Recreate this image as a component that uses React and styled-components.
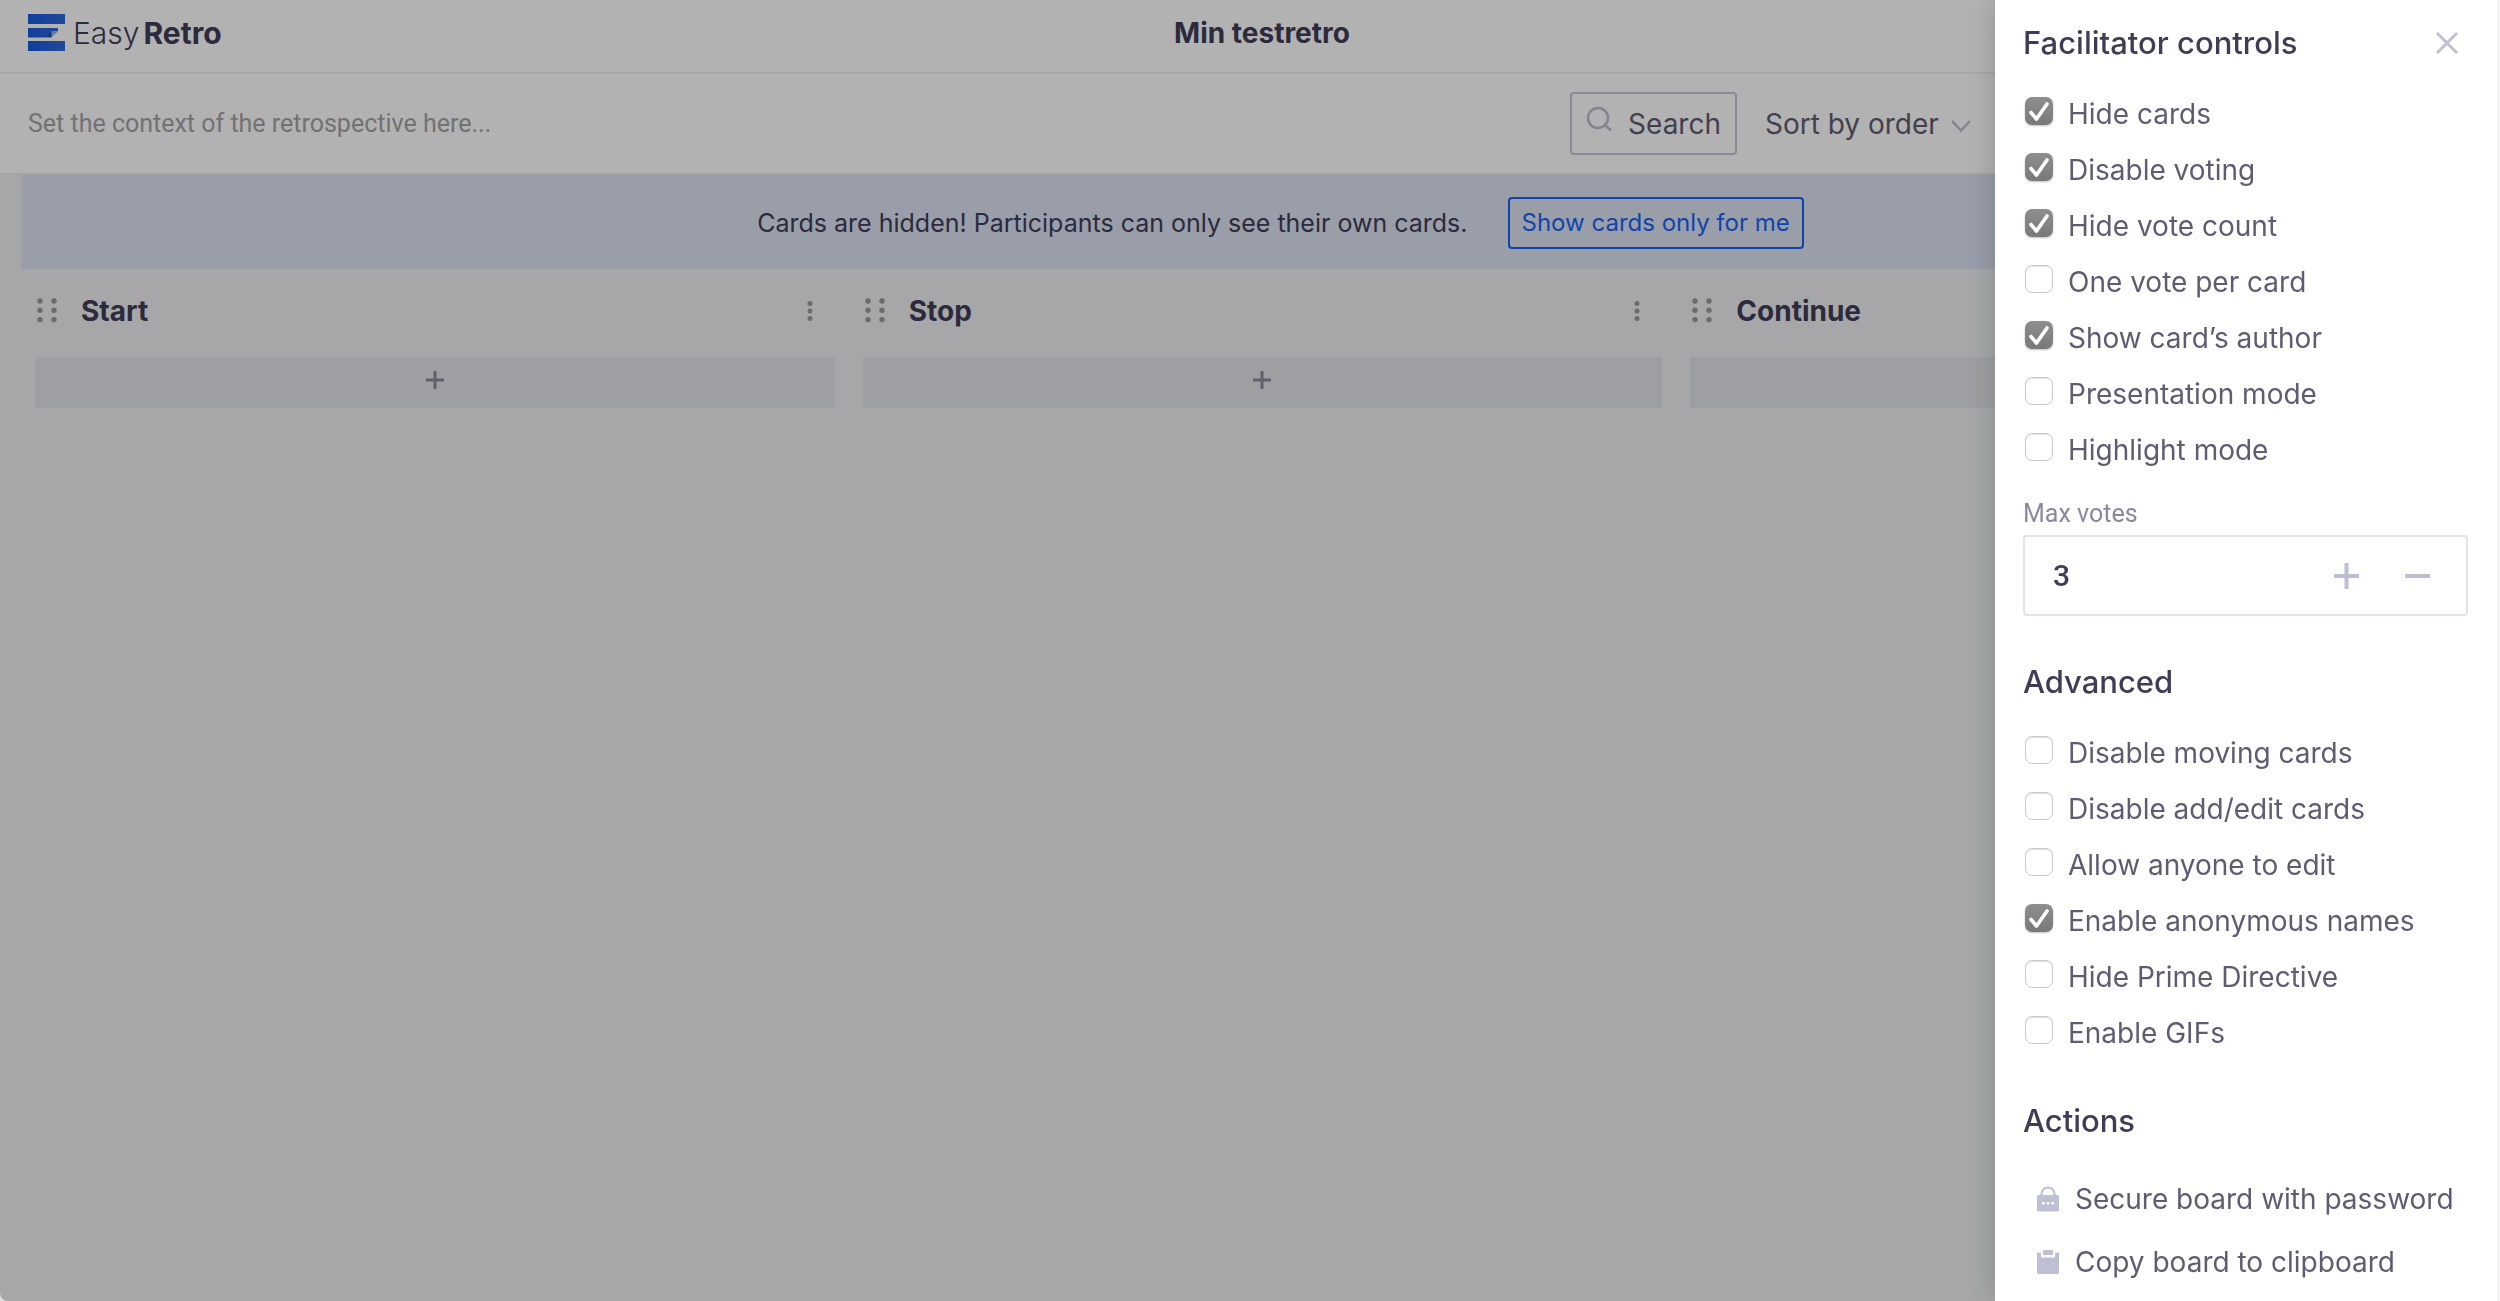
import React, { useState } from "react";
import styled, { createGlobalStyle } from "styled-components";

const INTER = `Inter, "Liberation Sans", sans-serif`;
const ROBOTO = `Roboto, "Liberation Sans", sans-serif`;

const GlobalStyle = createGlobalStyle`
  *, *::before, *::after { box-sizing: border-box; }
  html { background: #dedede; }
  body { margin: 0; font-family: ${INTER}; color: #3f3d56; overflow: hidden; }
  button, input, select { font: inherit; color: inherit; }
  h1, h2, ul { margin: 0; padding: 0; }
  ul { list-style: none; }
  svg { display: block; flex: none; }
`;

const Page = styled.div`
  position: relative;
  display: flex;
  flex-direction: column;
  min-height: 100vh;
  background: #eff0f2;
  overflow: hidden;
  border-bottom-left-radius: 8px;
`;

const TopBar = styled.header`
  display: grid;
  grid-template-columns: 1fr auto 1fr;
  align-items: center;
  height: 74px;
  padding: 0 4px 6px 28px;
  background: #fff;
  border-bottom: 2px solid #f1f1f1;
`;

const Logo = styled.a`
  display: flex;
  align-items: center;
  gap: 8px;
  color: #3f3d56;
  text-decoration: none;
  font-size: 30px;
  line-height: 40px;
  svg { margin-bottom: 2px; }
`;

const LogoText = styled.span`
  display: flex;
  gap: 4px;
  font-weight: 300;
`;

const LogoStrong = styled.span`
  font-weight: 700;
`;

const BoardTitle = styled.h1`
  font-size: 28px;
  line-height: 40px;
  font-weight: 700;
`;

const ContextBar = styled.div`
  display: flex;
  align-items: center;
  height: 101px;
  padding: 0 28px;
  background: #fff;
  border-bottom: 2px solid #ececee;
`;

const ContextInput = styled.input`
  flex: 1;
  min-width: 0;
  padding: 0;
  border: 0;
  outline: 0;
  background: none;
  font-family: ${ROBOTO};
  font-size: 25px;
  &::placeholder { color: #a4a4a4; opacity: 1; }
`;

const Tools = styled.div`
  display: flex;
  align-items: center;
  gap: 28px;
  margin-right: 501px;
`;

const SearchButton = styled.button`
  display: flex;
  align-items: center;
  gap: 16px;
  height: 63px;
  padding: 0 14px;
  border: 2px solid #c6c4d6;
  border-radius: 4px;
  background: none;
  font-size: 28px;
  color: #5f5c72;
  svg { margin-bottom: 10px; }
`;

const SortLabel = styled.label`
  display: flex;
  align-items: center;
  gap: 12px;
  color: #5f5c72;
  font-size: 28px;
`;

const SortSelect = styled.select`
  appearance: none;
  border: 0;
  padding: 0;
  outline: 0;
  background: none;
`;

const Board = styled.main`
  flex: 1;
  margin-right: -4px;
  padding-left: 21px;
`;

const Notice = styled.div`
  display: flex;
  align-items: center;
  justify-content: center;
  gap: 40px;
  height: 94px;
  padding: 1px 0 0 36px;
  background: #dbe2f3;
  font-size: 25px;
`;

const OutlineButton = styled.button`
  height: 52px;
  padding: 0 12px;
  border: 2px solid #1762f7;
  border-radius: 4px;
  background: none;
  font-size: 24px;
  color: #1762f7;
`;

const Columns = styled.div`
  display: grid;
  grid-template-columns: repeat(3, 1fr);
`;

const Column = styled.section`
  display: flex;
  flex-direction: column;
  padding: 0 14px;
`;

const ColumnHead = styled.header`
  display: flex;
  align-items: center;
  gap: 22px;
  height: 88px;
  padding: 0 21px 4px 2px;
`;

const ColumnTitle = styled.h2`
  flex: 1;
  font-size: 28px;
  line-height: 40px;
  font-weight: 700;
`;

const IconButton = styled.button`
  display: flex;
  align-items: center;
  justify-content: center;
  padding: 0;
  border: 0;
  background: none;
  color: ${(p) => p.$tone || "#bfbfd4"};
`;

const AddButton = styled(IconButton)`
  height: 51px;
  padding-bottom: 6px;
  background: #e3e4e8;
`;

const Overlay = styled.div`
  position: fixed;
  inset: 0;
  border-bottom-left-radius: 8px;
  background: rgba(0, 0, 0, 0.3);
`;

const Drawer = styled.aside`
  position: fixed;
  top: 0;
  right: 0;
  bottom: 0;
  width: 505px;
  display: flex;
  flex-direction: column;
  overflow: hidden;
  padding: 19px 29px 0 28px;
  background: #fff;
  border-right: 3px solid #f2f2f2;
  box-shadow: 0 0 30px rgba(0, 0, 0, 0.2);
`;

const DrawerHead = styled.div`
  display: flex;
  align-items: center;
  justify-content: space-between;
  padding: 0 9px 0 0;
`;

const Heading = styled.h2`
  font-size: 31px;
  line-height: 48px;
  font-weight: 500;
`;

const CheckList = styled.ul`
  display: flex;
  flex-direction: column;
  gap: 16px;
  padding: ${(p) => p.$pad};
`;

const CheckLabel = styled.label`
  display: flex;
  align-items: flex-start;
  gap: 15px;
  font-size: 28px;
  line-height: 40px;
  color: #5f5c72;
`;

const Tick = styled.span`
  display: grid;
  margin: 3px 0 0 2px;
  > * { grid-area: 1 / 1; }
  svg { pointer-events: none; }
`;

const TickInput = styled.input`
  appearance: none;
  width: 28px;
  height: 28px;
  margin: 0;
  border-radius: 7px;
  border: 1px solid #c9c9c9;
  background: #fff;
  box-shadow: inset 0 1px 1px rgba(0, 0, 0, 0.12);
  &:checked {
    border: 0;
    background: linear-gradient(#8e8e8e, #797979);
    box-shadow: 0 1px 2px rgba(0, 0, 0, 0.25);
  }
  & + svg { visibility: hidden; }
  &:checked + svg { visibility: visible; }
`;

const VotesLabel = styled.label`
  font-family: ${ROBOTO};
  font-size: 25px;
  line-height: 32px;
  color: #8b889e;
`;

const VotesField = styled.div`
  display: flex;
  align-items: center;
  height: 81px;
  margin: 5px 0 42px;
  padding: 0 36px 0 28px;
  gap: 46px;
  border: 2px solid #dfe3f2;
  border-radius: 4px;
`;

const VotesInput = styled.input`
  flex: 1;
  min-width: 0;
  padding: 0;
  border: 0;
  outline: 0;
  background: none;
  font-family: ${ROBOTO};
  font-size: 30px;
  font-weight: 500;
`;

const ActionList = styled.ul`
  display: flex;
  flex-direction: column;
  gap: 23px;
  padding: 34px 0 0 14px;
`;

const ActionButton = styled.button`
  display: flex;
  align-items: center;
  gap: 16px;
  padding: 0;
  border: 0;
  background: none;
  font-size: 28px;
  line-height: 40px;
  color: #5f5c72;
`;

const LogoMark = () => (
  <svg width="37" height="37" viewBox="0 0 37 37" aria-hidden="true">
    <defs>
      <linearGradient id="mark" x1="0" x2="1">
        <stop offset="0" stopColor="#175be0" />
        <stop offset="1" stopColor="#3069d8" />
      </linearGradient>
    </defs>
    <path d="M0 0H37V10H0ZM0 27H37V37H0Z" fill="url(#mark)" />
    <path d="M0 14H30V17L23 23.500H0Z" fill="url(#mark)" />
    <path d="M18 23L24 17V23Z" fill="#1b4eb4" />
    <path d="M23.500 17H30L23.500 23Z" fill="#9ab4e6" />
  </svg>
);

const Grip = () => (
  <svg width="22" height="26" viewBox="0 0 22 26" fill="#9a9a9a" aria-hidden="true">
    {[3, 12.3, 21.600].map((y) => (
      <g key={y}>
        <circle cx="3" cy={y} r="2.700" />
        <circle cx="17" cy={y} r="2.700" />
      </g>
    ))}
  </svg>
);

const Dots = () => (
  <svg width="8" height="22" viewBox="0 0 8 22" fill="#9a9a9a" aria-hidden="true">
    {[3.5, 11, 18.5].map((y) => (
      <circle key={y} cx="4" cy={y} r="2.500" />
    ))}
  </svg>
);

const Stroke = ({ w, h, d, sw, color = "currentColor" }) => (
  <svg width={w} height={h} viewBox={`0 0 ${w} ${h}`} fill="none" stroke={color} strokeWidth={sw} aria-hidden="true">
    <path d={d} />
  </svg>
);

const CheckMark = () => (
  <svg width="28" height="28" viewBox="0 0 28 28" fill="none" stroke="#fff" strokeWidth="3.600" strokeLinecap="round" strokeLinejoin="round" aria-hidden="true">
    <path d="M6 15.500L11.500 22L22 7" />
  </svg>
);

const LockIcon = () => (
  <svg width="22" height="26" viewBox="0 0 22 26" aria-hidden="true">
    <path d="M4.500 10V8a6.500 6.500 0 0 1 13 0V10" fill="none" stroke="#bfbfd4" strokeWidth="2.200" />
    <rect y="9" width="22" height="16.500" rx="1.500" fill="#bfbfd4" />
    <path d="M5 16h2.600v2.600H5zM9.700 16h2.600v2.600H9.700zM14.400 16h2.600v2.600h-2.600z" fill="#fff" />
  </svg>
);

const ClipboardIcon = () => (
  <svg width="22" height="26" viewBox="0 0 22 26" fill="#bfbfd4" aria-hidden="true">
    <path d="M1 3.500H4V8.500H18V3.500H21Q22 3.500 22 4.500V24Q22 25 21 25H1Q0 25 0 24V4.500Q0 3.500 1 3.500Z" />
    <rect x="6" y="1" width="10" height="5" rx="0.500" />
  </svg>
);

const FACILITATOR = [
  ["Hide cards", true],
  ["Disable voting", true],
  ["Hide vote count", true],
  ["One vote per card", false],
  ["Show card’s author", true],
  ["Presentation mode", false],
  ["Highlight mode", false],
];

const ADVANCED = [
  ["Disable moving cards", false],
  ["Disable add/edit cards", false],
  ["Allow anyone to edit", false],
  ["Enable anonymous names", true],
  ["Hide Prime Directive", false],
  ["Enable GIFs", false],
];

const Checks = ({ items, pad }) => (
  <CheckList $pad={pad}>
    {items.map(([text, on]) => (
      <li key={text}>
        <CheckLabel>
          <Tick>
            <TickInput type="checkbox" defaultChecked={on} />
            <CheckMark />
          </Tick>
          {text}
        </CheckLabel>
      </li>
    ))}
  </CheckList>
);

export default function App() {
  const [votes, setVotes] = useState(3);
  return (
    <>
      <GlobalStyle />
      <Page>
        <TopBar>
          <Logo href="#">
            <LogoMark />
            <LogoText>
              Easy<LogoStrong>Retro</LogoStrong>
            </LogoText>
          </Logo>
          <BoardTitle>Min testretro</BoardTitle>
        </TopBar>
        <ContextBar>
          <ContextInput aria-label="Context" placeholder="Set the context of the retrospective here..." />
          <Tools>
            <SearchButton type="button">
              <svg width="26" height="26" viewBox="0 0 26 26" fill="none" stroke="#bfbccf" strokeWidth="2.500" aria-hidden="true">
                <circle cx="12" cy="12" r="10" />
                <path d="M18 18L25 24.500" />
              </svg>
              Search
            </SearchButton>
            <SortLabel>
              <SortSelect aria-label="Sort">
                <option>Sort by order</option>
              </SortSelect>
              <Stroke w={20} h={18} d="M1 6L10 15.500L19 6" sw={2.5} color="#bfbccf" />
            </SortLabel>
          </Tools>
        </ContextBar>
        <Board>
          <Notice>
            <span>Cards are hidden! Participants can only see their own cards.</span>
            <OutlineButton type="button">Show cards only for me</OutlineButton>
          </Notice>
          <Columns>
            {["Start", "Stop", "Continue"].map((name) => (
              <Column key={name}>
                <ColumnHead>
                  <Grip />
                  <ColumnTitle>{name}</ColumnTitle>
                  <IconButton type="button" aria-label={`${name} menu`}>
                    <Dots />
                  </IconButton>
                </ColumnHead>
                <AddButton type="button" aria-label={`Add card to ${name}`} $tone="#8b899b">
                  <Stroke w={18} h={18} d="M9 0V18M0 9H18" sw={3} />
                </AddButton>
              </Column>
            ))}
          </Columns>
        </Board>
      </Page>
      <Overlay />
      <Drawer>
        <DrawerHead>
          <Heading>Facilitator controls</Heading>
          <IconButton type="button" aria-label="Close">
            <Stroke w={24} h={24} d="M2 2L22 22M22 2L2 22" sw={3} />
          </IconButton>
        </DrawerHead>
        <Checks items={FACILITATOR} pad="27px 0 28px" />
        <VotesLabel htmlFor="votes">Max votes</VotesLabel>
        <VotesField>
          <VotesInput id="votes" value={votes} onChange={(e) => setVotes(Number(e.target.value) || 0)} />
          <IconButton type="button" aria-label="More votes" onClick={() => setVotes(votes + 1)}>
            <Stroke w={25} h={26} d="M12.500 0V26M0 13H25" sw={4} />
          </IconButton>
          <IconButton type="button" aria-label="Fewer votes" onClick={() => setVotes(votes - 1)}>
            <Stroke w={25} h={26} d="M0 13H25" sw={4} />
          </IconButton>
        </VotesField>
        <Heading>Advanced</Heading>
        <Checks items={ADVANCED} pad="27px 0 44px" />
        <Heading>Actions</Heading>
        <ActionList>
          <li>
            <ActionButton type="button">
              <LockIcon />
              Secure board with password
            </ActionButton>
          </li>
          <li>
            <ActionButton type="button">
              <ClipboardIcon />
              Copy board to clipboard
            </ActionButton>
          </li>
        </ActionList>
      </Drawer>
    </>
  );
}
